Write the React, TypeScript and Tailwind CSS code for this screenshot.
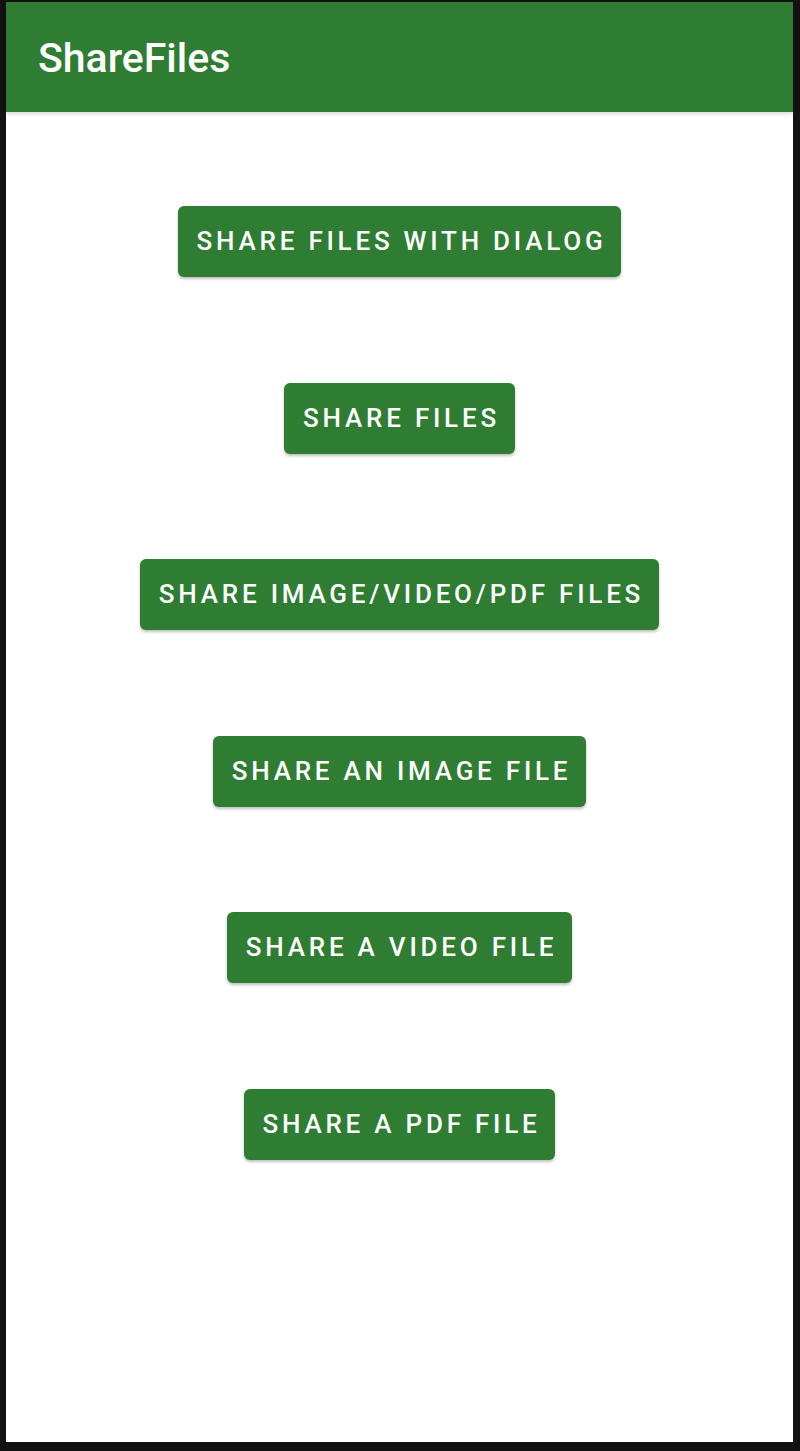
const buttons = [
  'Share files with dialog',
  'Share files',
  'Share image/video/pdf files',
  'Share an image file',
  'Share a video file',
  'Share a PDF file',
];

export default function App() {
  return (
    <div className="h-[1451px] w-[800px] bg-[#121212] pt-[2px] pr-[7px] pb-[9px] pl-[6px] font-['Roboto',sans-serif]">
      <div className="flex h-full flex-col bg-white">
        <header className="flex h-[110px] shrink-0 items-center bg-[#2e7d32] pl-[32px] shadow-[0_2px_4px_rgba(0,0,0,0.15)]">
          <h1 className="pt-[4px] text-[41px] font-medium text-white">ShareFiles</h1>
        </header>
        <main className="mt-[94px] flex flex-col items-center gap-[105.6px]">
          {buttons.map((label) => (
            <button
              key={label}
              type="button"
              className="h-[71px] rounded-[6px] bg-[#2e7d32] pr-[15px] pl-[19px] text-[26px] font-medium uppercase tracking-[0.145em] text-white shadow-[0_2px_3px_rgba(0,0,0,0.25)]"
            >
              {label}
            </button>
          ))}
        </main>
      </div>
    </div>
  );
}
